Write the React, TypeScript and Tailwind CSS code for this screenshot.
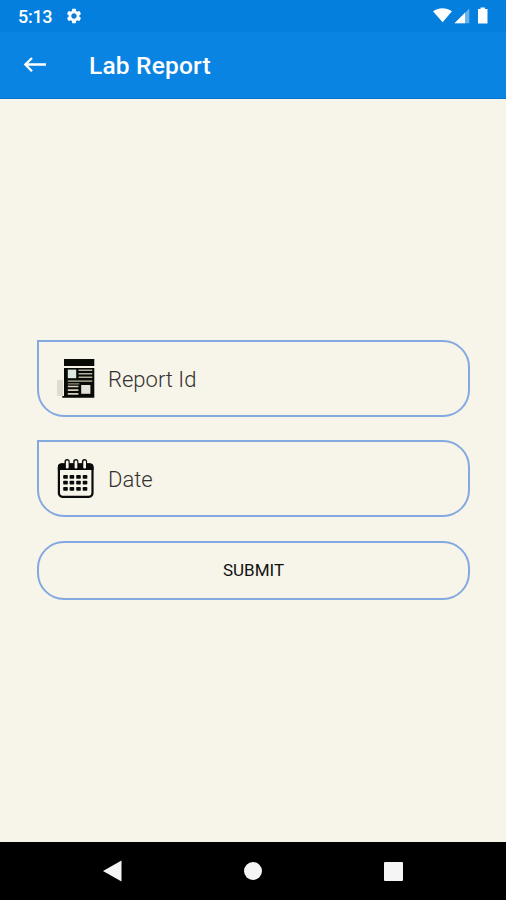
import { ChangeEvent, ReactNode, useState } from "react";

type FieldProps = {
  icon: ReactNode;
  placeholder: string;
  value: string;
  onChange: (value: string) => void;
};

function GearIcon() {
  return (
    <svg className="w-[18px] h-[18px]" viewBox="0 0 24 24" fill="#fff">
      <path d="M19.14 12.94c.04-.3.06-.61.06-.94 0-.32-.02-.64-.07-.94l2.03-1.58c.18-.14.23-.41.12-.61l-1.92-3.32c-.12-.22-.37-.29-.59-.22l-2.39.96c-.5-.38-1.03-.7-1.62-.94l-.36-2.54c-.04-.24-.24-.41-.48-.41h-3.84c-.24 0-.43.17-.47.41l-.36 2.54c-.59.24-1.13.57-1.62.94l-2.39-.96c-.22-.08-.47 0-.59.22L2.74 8.87c-.12.21-.08.47.12.61l2.03 1.58c-.05.3-.09.63-.09.94s.02.64.07.94l-2.03 1.58c-.18.14-.23.41-.12.61l1.92 3.32c.12.22.37.29.59.22l2.39-.96c.5.38 1.03.7 1.62.94l.36 2.54c.05.24.24.41.48.41h3.84c.24 0 .44-.17.47-.41l.36-2.54c.59-.24 1.13-.56 1.62-.94l2.39.96c.22.08.47 0 .59-.22l1.92-3.32c.12-.22.07-.47-.12-.61l-2.01-1.58zM12 15.6c-1.98 0-3.6-1.62-3.6-3.6s1.62-3.6 3.6-3.6 3.6 1.62 3.6 3.6-1.62 3.6-3.6 3.6z" />
    </svg>
  );
}

// Wifi, signal and battery
function StatusIcons() {
  return (
    <svg className="w-[58px] h-[18px]" viewBox="0 0 58 18" fill="#fff">
      <path d="M0 4.2C6 .3 13 .3 19 4.2L9.6 15.3z" />
      <path d="M36.3 1.5v14.8H21.5z" opacity="0.4" />
      <path d="M32 5.8v10.5H21.5z" />
      <path d="M47.5.5h4.4v1.6h2.6v14.4H45V2.1h2.5z" />
    </svg>
  );
}

function BackIcon() {
  return (
    <svg className="w-[23px] h-[16px]" viewBox="0 0 23 16" fill="none" stroke="#fff" strokeWidth="2.3">
      <path d="M23 7.5H2.3M9 1L2.3 7.5l6.7 6.7" />
    </svg>
  );
}

function ReportIcon() {
  return (
    <svg className="w-[42px] h-[44px]" viewBox="0 0 42 44">
      <path d="M1 24h6v16H1z" fill="#dedcd2" />
      <path d="M8 3h30.3v7H8zM8 12h30.3v29.7H6.3V40H8z" fill="#080a05" />
      <path d="M11.8 13.6h8.4v8.6h-8.4z" fill="#dce8e2" />
      <path d="M22.5 13.6h13.8v1.5H22.5zM22.5 17h13.8v1.6H22.5zM22.5 20.4h13.8v1.6H22.5z" fill="#b3b09d" />
      <path d="M11.8 24.2h24.5v1.9H11.8zM11.8 27.3h11.5v1.2H11.8z" fill="#8f8c78" />
      <path d="M11.8 29.8h10.6v1.5H11.8zM11.8 33.3h10.6v1.6H11.8zM11.8 37h10.6v1.7H11.8z" fill="#d5d1bf" />
      <path d="M25.2 29h9.2v8.8h-9.2z" fill="#e6e1d8" />
    </svg>
  );
}

function CalendarIcon() {
  return (
    <svg className="w-[42px] h-[44px]" viewBox="0 0 42 44">
      <rect x="2.9" y="8.5" width="33.6" height="32.3" rx="3.5" fill="#f7f4e9" stroke="#0a0a0a" strokeWidth="2.2" />
      <path d="M1.8 14V11q0-3.7 3.7-3.7h28.4q3.7 0 3.7 3.7v3z" fill="#0a0a0a" />
      {[10.6, 19.3, 28].map((x) => (
        <g key={x}>
          <rect x={x - 2.1} y="3" width="5.2" height="10" rx="2.6" fill="#0a0a0a" />
          <rect x={x - 0.7} y="4.6" width="2.7" height="8" rx="1.3" fill="#f7f4e9" />
        </g>
      ))}
      {[19, 24.8, 31].map((y) =>
        [7.2, 13.6, 20.2, 26.7].map((x) => (
          <rect key={`${x}-${y}`} x={x} y={y} width="4.6" height="3.8" rx="0.8" fill="#0a0a0a" />
        ))
      )}
    </svg>
  );
}

function Field({ icon, placeholder, value, onChange }: FieldProps) {
  return (
    <label className="flex items-center h-[77px] pl-[17px] border-2 border-[#84a9e1] rounded-[27px] rounded-tl-none">
      <span className="pb-[1px]">{icon}</span>
      <input
        type="text"
        className="w-[330px] ml-[10px] pt-[1px] text-[22px] font-light text-[#333] placeholder:text-[#333230] bg-transparent outline-none"
        placeholder={placeholder}
        value={value}
        onChange={(event: ChangeEvent<HTMLInputElement>) => onChange(event.target.value)}
      />
    </label>
  );
}

export default function App() {
  const [reportId, setReportId] = useState("");
  const [date, setDate] = useState("");

  return (
    <div className="flex flex-col w-full h-screen bg-[#f7f4e9] font-[Roboto,sans-serif]">
      <header className="h-[99px] bg-[#0a84e3] border-b border-[#0873ce]">
        <div className="flex items-center h-[32px] pl-[18px] pr-[15px] bg-[#057fdd] text-white">
          <span className="text-[18px] font-medium tracking-[-0.3px]">5:13</span>
          <span className="ml-[13px]">
            <GearIcon />
          </span>
          <span className="ml-auto">
            <StatusIcons />
          </span>
        </div>
        <div className="flex items-center h-[66px] pl-[23px] text-white">
          <BackIcon />
          <h1 className="ml-[43px] pt-[2px] text-[24.5px] font-medium tracking-[0.2px]">Lab Report</h1>
        </div>
      </header>

      <main className="flex flex-1 flex-col gap-[23px] pt-[241px] pl-[37px] pr-[36px]">
        <Field icon={<ReportIcon />} placeholder="Report Id" value={reportId} onChange={setReportId} />
        <Field icon={<CalendarIcon />} placeholder="Date" value={date} onChange={setDate} />
        <button className="h-[59px] mt-px pt-[1px] border-2 border-[#84a9e1] rounded-[27px] text-[17px] text-[#111]">
          SUBMIT
        </button>
      </main>

      <nav className="grid grid-cols-[140px_140px_140px] justify-center items-center justify-items-center h-[58px] bg-black">
        <svg className="w-[20px] h-[22px]" viewBox="0 0 20 22" fill="#f5f5f5">
          <path d="M0 11L18.5 .5v21z" />
        </svg>
        <span className="w-[18px] h-[18px] rounded-full bg-[#f5f5f5]" />
        <span className="w-[19px] h-[19px] rounded-[1px] bg-[#f5f5f5]" />
      </nav>
    </div>
  );
}
